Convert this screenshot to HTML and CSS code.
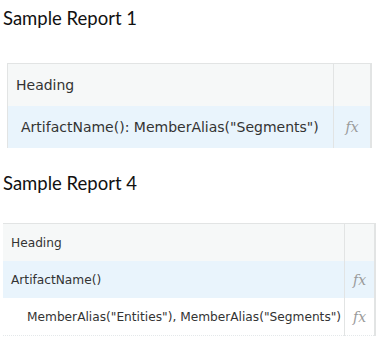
FILE: index.html
```html
<!DOCTYPE html>
<html lang="en">
<head>
  <meta charset="UTF-8" />
  <title>Sample Reports</title>
  <link rel="stylesheet" href="styles.css">
</head>
<body>

  <section class="report report-one">
    <h2>Sample Report 1</h2>
    <table class="grid">
      <tr class="head-row">
        <td class="cell">Heading</td>
        <td class="fx-cell"></td>
      </tr>
      <tr class="row-blue">
        <td class="cell indent-1">ArtifactName(): MemberAlias("Segments")</td>
        <td class="fx-cell"><span class="fx">fx</span></td>
      </tr>
    </table>
  </section>

  <section class="report report-four">
    <h2>Sample Report 4</h2>
    <table class="grid small">
      <tr class="head-row">
        <td class="cell">Heading</td>
        <td class="fx-cell"></td>
      </tr>
      <tr class="row-blue">
        <td class="cell">ArtifactName()</td>
        <td class="fx-cell"><span class="fx">fx</span></td>
      </tr>
      <tr class="row-white">
        <td class="cell indent-2">MemberAlias("Entities"), MemberAlias("Segments")</td>
        <td class="fx-cell"><span class="fx">fx</span></td>
      </tr>
    </table>
  </section>

</body>
</html>
```

FILE: styles.css
```css
:root {
  --grid-line: #e2e4e4;
  --head-bg: #f6f8f8;
  --blue-bg: #e9f4fc;
  --text-dark: #333;
}

body {
  margin: 0;
  background: #fff;
  color: #111;
  font-family: 'Lato', sans-serif;
}

.report h2 {
  margin: 0;
  font-size: 18.5px;
  font-weight: 400;
  line-height: 24px;
  padding-left: 3px;
}

.report-one {
  padding-top: 6px;
}

.report-one h2 {
  margin-bottom: 33px;
}

.report-four {
  padding-top: 23px;
}

.report-four h2 {
  margin-bottom: 28px;
}

.grid {
  border-collapse: collapse;
  font-family: 'DejaVu Sans', sans-serif;
  color: var(--text-dark);
  font-size: 14px;
  margin-left: 7px;
  width: 365px;
  border-top: 1px solid var(--grid-line);
  border-left: 1px solid var(--grid-line);
  border-right: 2px solid var(--grid-line);
}

.grid td {
  padding: 0;
}

.cell {
  padding-left: 8px !important;
  height: 42px;
}

.fx-cell {
  width: 36px;
  border-left: 1px solid var(--grid-line);
  text-align: center;
}

.head-row {
  background: var(--head-bg);
}

.row-blue {
  background: var(--blue-bg);
}

.row-white {
  background: #fff;
}

.indent-1 {
  padding-left: 13px !important;
}

.fx {
  font-family: 'DejaVu Serif', serif;
  font-style: italic;
  color: #9a9a9a;
  font-size: 14px;
}

.grid.small {
  font-size: 12.2px;
  margin-left: 3px;
  width: 373px;
  border-left: none;
  border-bottom: 1px dotted #e4e8ea;
}

.grid.small .cell {
  height: 37px;
}

.grid.small .fx-cell {
  width: 29px;
}

.grid.small .indent-2 {
  padding-left: 24px !important;
}
```
